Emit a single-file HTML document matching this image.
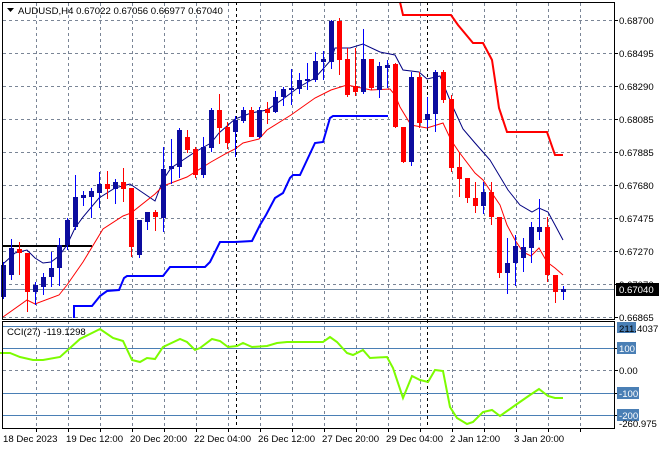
<!DOCTYPE html>
<html><head><meta charset="utf-8"><style>
html,body{margin:0;padding:0;background:#fff;width:660px;height:450px;overflow:hidden}
svg{display:block}
text{font-family:"Liberation Sans",sans-serif;font-size:9.6px;fill:#000}
</style></head><body>
<svg id="s" width="660" height="450" xmlns="http://www.w3.org/2000/svg">
<rect width="660" height="450" fill="#fff"/>
<g id="grid" stroke="#7a8596" stroke-width="1" stroke-dasharray="3,3" fill="none"></g>
<line x1="236.5" y1="2" x2="236.5" y2="429" stroke="#000" stroke-dasharray="3,3"/>
<line x1="427.5" y1="2" x2="427.5" y2="429" stroke="#000" stroke-dasharray="3,3"/>
<g stroke="#4a7fb5" stroke-width="1">
<line x1="2" y1="326.5" x2="614" y2="326.5"/>
<line x1="2" y1="348.5" x2="614" y2="348.5"/>
<line x1="2" y1="393.5" x2="614" y2="393.5"/>
<line x1="2" y1="415.5" x2="614" y2="415.5"/>
</g>
<line x1="2" y1="289.5" x2="614" y2="289.5" stroke="#7890a8"/>
<line x1="2" y1="246" x2="92" y2="246" stroke="#000" stroke-width="2"/>
<polyline fill="none" stroke="#0000ff" stroke-width="2" points="74,318 74,306 92,306 100,296 107,291 119,290 124,278 127,276 163,276 170,267 205,267 210,262 220,242 235,242 252,241 260,225 266,215 275,198 283,193 290,178 293,175 300,175 315,143 323,142 330,118 333,116 388,116"/>
<polyline fill="none" stroke="#ff0000" stroke-width="2" points="400,2 403,15 451,15 458,25 473,43 483,43 492,60 495,80 499,108 507,132 547,132 555,155 563,155"/>
<polyline fill="none" stroke="#000080" stroke-width="1" points="3,264 15,253 27,250 35,258 43,263 51,262 59,256 67,245 75,228 83,217 99,198 115,188 130,184 155,201 163,180 171,168 195,152 211,143 219,133 235,119 251,113 267,110 283,99 299,87 315,78 331,60 335,48 350,48 363,44 380,52 395,55 403,70 419,72 427,79 440,76 452,105 463,129 475,143 490,160 508,190 520,205 532,212 539,208 548,212 555,225 563,240"/>
<polyline fill="none" stroke="#ff0000" stroke-width="1" points="3,317 27,300 35,304 59,295 67,285 83,262 103,229 123,216 131,213 155,194 163,186 187,177 211,162 227,153 235,149 243,143 259,139 267,130 291,115 315,98 331,90 347,85 371,90 390,89 395,95 400,107 411,125 427,128 443,123 451,140 459,152 475,173 483,180 500,205 507,225 515,240 523,252 531,256 539,248 547,262 555,268 563,275"/>
<g id="candles"></g>
<polyline fill="none" stroke="#7cfc00" stroke-width="2" points="0,353 10,353 20,357 33,360 43,360 60,357 70,348 80,339 100,329 113,338 123,341 132,360 140,362 147,358 155,359 163,347 180,339 187,342 195,350 200,348 212,339 220,341 228,347 237,346 243,343 252,347 267,346 277,343 287,342 310,342 323,342 330,337 337,342 347,353 353,355 363,350 370,358 387,357 393,368 403,398 412,376 420,380 428,382 435,370 443,371 450,407 457,418 467,424 473,422 483,412 492,410 500,416 517,404 530,395 539,389 548,396 555,398 563,398"/>
<g stroke="#000" fill="none">
<rect x="2.5" y="2.5" width="612" height="317"/>
<rect x="2.5" y="321.5" width="612" height="107"/>
</g>
<g id="ticks" stroke="#000"></g>
<path d="M7,8 L14,8 L10.5,12 Z" fill="#000"/>
<text x="18" y="14">AUDUSD,H4  0.67022 0.67056 0.66977 0.67040</text>
<text x="7" y="335">CCI(27) -119.1298</text>
<g>
<text x="619" y="24">0.68700</text>
<text x="619" y="57">0.68495</text>
<text x="619" y="90">0.68290</text>
<text x="619" y="123">0.68085</text>
<text x="619" y="156">0.67885</text>
<text x="619" y="189">0.67680</text>
<text x="619" y="222">0.67475</text>
<text x="619" y="255">0.67270</text>
<text x="619" y="288">0.67070</text>
<rect x="616" y="283" width="43" height="13" fill="#000"/>
<text x="619" y="293" style="fill:#fff">0.67040</text>
<text x="619" y="321">0.66865</text>
<rect x="617" y="322" width="19" height="11" fill="#4a7fb5"/>
<text x="619" y="332">211.4037</text>
<rect x="617" y="342" width="19" height="12" fill="#4a7fb5"/>
<text x="619" y="352" style="fill:#fff">100</text>
<text x="619" y="374">0.00</text>
<rect x="617" y="387" width="22" height="12" fill="#4a7fb5"/>
<text x="619" y="397" style="fill:#fff">-100</text>
<rect x="617" y="409" width="22" height="12" fill="#4a7fb5"/>
<text x="619" y="419" style="fill:#fff">-200</text>
<text x="619" y="427">-260.975</text>
</g>
<g>
<text x="3" y="442">18 Dec 2023</text>
<text x="66" y="442">19 Dec 12:00</text>
<text x="130" y="442">20 Dec 20:00</text>
<text x="194" y="442">22 Dec 04:00</text>
<text x="258" y="442">26 Dec 12:00</text>
<text x="322" y="442">27 Dec 20:00</text>
<text x="386" y="442">29 Dec 04:00</text>
<text x="450" y="442">2 Jan 12:00</text>
<text x="514" y="442">3 Jan 20:00</text>
</g>
</svg>
<script>
var NS="http://www.w3.org/2000/svg";
function el(p,t,a){var e=document.createElementNS(NS,t);for(var k in a)e.setAttribute(k,a[k]);p.appendChild(e);return e;}
var g=document.getElementById("grid");
var xs=[36,68,100,132,164,196,228,260,292,324,356,388,420,452,484,516,548,580];
xs.forEach(function(x){el(g,"line",{x1:x+.5,y1:3,x2:x+.5,y2:428});});
[20,53,86,119,152,185,218,251,284,317,370].forEach(function(y){el(g,"line",{x1:3,y1:y+.5,x2:614,y2:y+.5});});
var tk=document.getElementById("ticks");
xs.forEach(function(x){el(tk,"line",{x1:x+.5,y1:429,x2:x+.5,y2:432});});
[20,53,86,119,152,185,218,251,284,317,348,370,393,415].forEach(function(y){el(tk,"line",{x1:614,y1:y+.5,x2:618,y2:y+.5});});
var B="b",R="r";
var d=[[265,297,262,299,B],[248,275,239,280,B],[249,253,242,275,R],[253,292,253,312,R],[285,292,282,305,B],[277,287,273,295,B],[268,277,252,287,B],[245,268,238,286,B],[220,245,218,250,B],
[197,227,175,230,B],[195,198,191,206,B],[191,197,188,218,B],[184,193,172,208,B],[184,189,171,199,R],[182,189,179,204,B],[182,189,168,202,R],[188,247,188,257,R],[220,255,220,258,B],[212,222,212,230,B],[212,217,210,231,R],[169,218,147,232,B],[166,169,139,184,B],[130,167,128,178,B],[137,150,130,153,R],[149,175,147,178,R],[147,175,137,178,B],[110,148,108,152,B],[110,128,94,144,R],[127,143,122,149,R],[120,132,116,157,B],[110,121,107,123,B],[110,137,107,137,R],[110,137,107,138,B],[109,113,102,124,R],[97,112,91,113,B],[89,97,87,106,B],[88,90,69,105,B],[80,89,73,94,B],[79,81,63,90,B],[61,80,52,82,B],[59,62,51,80,B],[21,62,20,69,B],[21,60,18,75,R],[59,95,48,97,R],[86,92,48,96,R],[59,92,29,94,B],[59,88,59,90,R],[66,90,62,98,B],[65,68,60,88,B],[64,127,63,128,R],[127,162,127,163,R],[77,162,72,166,B],[77,123,72,128,R],[114,120,97,128,B],[72,114,70,132,B],[72,100,70,103,R],[99,168,95,172,R],[167,179,152,197,R],[178,198,178,203,R],[198,206,182,213,R],[192,206,182,214,B],[192,217,182,225,R],[217,273,217,278,R],[263,273,238,294,B],[246,263,235,286,B],[247,258,238,272,B],[227,248,222,263,B],[227,232,199,240,B],[227,275,217,282,R],[275,292,275,303,R],[289,292,286,300,B]];
var c=document.getElementById("candles");
d.forEach(function(a,i){var x=3+8*i;var col=a[4]==B?"#0000ff":"#ff0000";var bc=a[4]==B?"#0c0c9e":"#ff0000";
el(c,"line",{x1:x+.5,y1:a[2],x2:x+.5,y2:a[3],stroke:col,"stroke-width":1});
el(c,"rect",{x:x-2,y:a[0],width:5,height:Math.max(2,a[1]-a[0]),fill:bc});});
</script>
</body></html>
